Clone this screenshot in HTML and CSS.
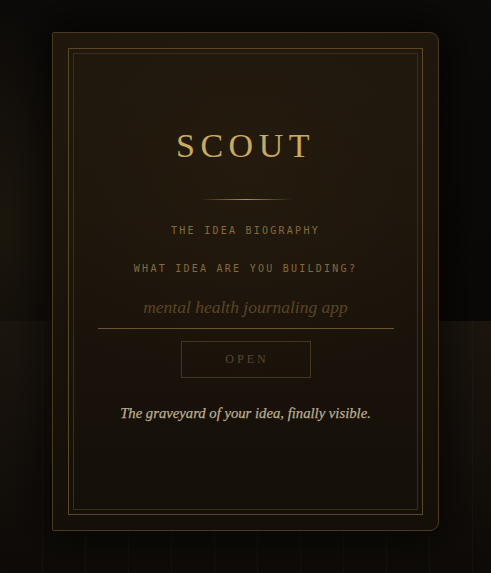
FILE: index.html
```html
<!DOCTYPE html>
<html lang="en">
<head>
<meta charset="utf-8">
<title>Scout</title>
<link rel="stylesheet" href="styles.css">
</head>
<body>
<main class="book">
  <div class="frame">
    <div class="frame-inner">
      <h1 class="title">SCOUT</h1>
      <div class="rule"></div>
      <p class="kicker">THE IDEA BIOGRAPHY</p>
      <label class="question" for="idea">WHAT IDEA ARE YOU BUILDING?</label>
      <input class="idea" id="idea" type="text" placeholder="mental health journaling app">
      <button class="open" type="button">OPEN</button>
      <p class="tagline">The graveyard of your idea, finally visible.</p>
    </div>
  </div>
</main>
</body>
</html>
```
FILE: styles.css
```css
html, body {
  margin: 0;
  height: 100%;
}
body {
  padding-top: 32px;
  box-sizing: border-box;
  background:
    radial-gradient(ellipse 160px 220px at 0% 70%, rgba(70, 52, 28, 0.3), transparent 100%) 0 0 / 100% 321px no-repeat,
    linear-gradient(#0d0b09, #0b0907) 0 0 / 100% 321px no-repeat,
    repeating-linear-gradient(90deg, transparent 0 42px, rgba(120, 95, 60, 0.07) 42px 43px) 0 321px / 100% 100% no-repeat,
    linear-gradient(to bottom, #0d0b09 0 321px, #1d160f 321px, #0e0b08 100%);
  font-family: "Liberation Serif", serif;
}
.book {
  width: 387px;
  height: 499px;
  margin: 0 auto;
  box-sizing: border-box;
  border: 1px solid #4a3a20;
  border-radius: 2px 9px 9px 2px;
  padding: 15px;
  background:
    radial-gradient(ellipse 260px 220px at 50% 28%, rgba(44, 32, 16, 0.5), transparent 100%),
    linear-gradient(to bottom, #1f170d, #1a130b 55%, #140f09);
  box-shadow: 0 0 40px 12px rgba(0, 0, 0, 0.6);
}
.frame {
  height: 100%;
  box-sizing: border-box;
  border: 1px solid #5a4828;
  padding: 4px;
}
.frame-inner {
  height: 100%;
  box-sizing: border-box;
  border: 1px solid #3c2f1a;
  display: flex;
  flex-direction: column;
  align-items: center;
}
.title {
  margin: 72px 0 0;
  font-family: "Liberation Serif", serif;
  font-weight: normal;
  font-size: 34px;
  line-height: 40px;
  letter-spacing: 5.5px;
  color: #c9aa60;
}
.rule {
  margin-top: 33px;
  width: 92px;
  height: 1px;
  background: linear-gradient(90deg, transparent, #b08f4a 50%, transparent);
}
.kicker, .question {
  font-family: "DejaVu Sans Mono", monospace;
  font-size: 10px;
  line-height: 14px;
  letter-spacing: 2.25px;
  color: #856b3e;
}
.kicker {
  margin: 24px 0 0;
}
.question {
  margin-top: 24px;
  display: block;
}
.idea {
  margin-top: 16px;
  width: 296px;
  height: 37px;
  box-sizing: border-box;
  padding: 0 0 5px;
  border: 0;
  border-bottom: 1px solid #6a5431;
  background: transparent;
  font-family: "Liberation Serif", serif;
  font-style: italic;
  font-size: 17.5px;
  line-height: 30px;
  text-align: center;
  color: #c9aa60;
  outline: none;
}
.idea::placeholder {
  color: #5a4526;
  opacity: 1;
}
.open {
  margin-top: 12px;
  width: 130px;
  height: 37px;
  box-sizing: border-box;
  border: 1px solid #45361e;
  background: transparent;
  font-family: "Liberation Serif", serif;
  font-size: 12px;
  letter-spacing: 3px;
  padding: 0 0 0 3px;
  color: #5a4729;
  cursor: pointer;
}
.tagline {
  margin: 25px 0 0;
  font-family: "Liberation Serif", serif;
  font-style: italic;
  font-size: 14.7px;
  line-height: 20px;
  color: #bcad90;
  -webkit-text-stroke: 0.25px #bcad90;
}
```
